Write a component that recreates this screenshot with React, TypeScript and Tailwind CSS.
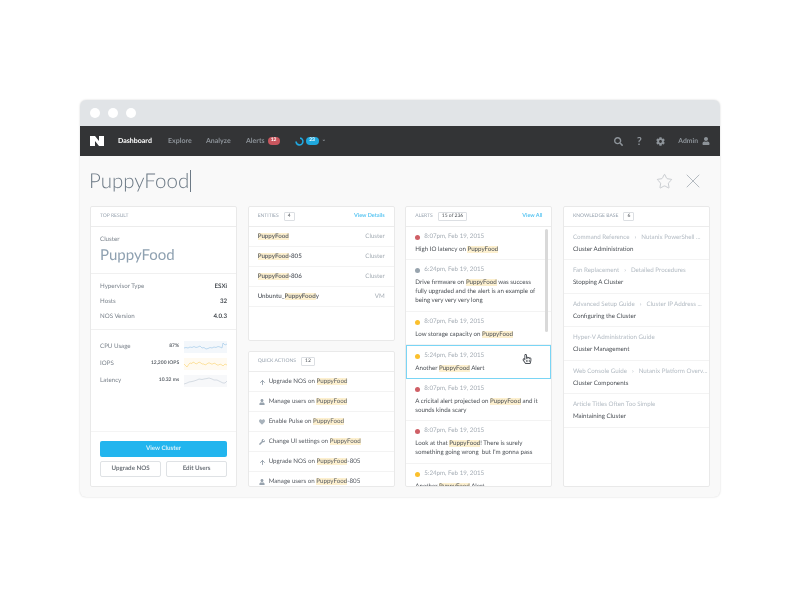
import { ArrowUp, Star, X } from "lucide-react";
import { FaSearch, FaCog, FaUser, FaWrench, FaHeart, FaRegHandPointer } from "react-icons/fa";

const font = "font-['Lato',sans-serif]";

// wraps every PuppyFood in the yellow search highlight
function Hl({ text }: { text: string }) {
  const parts = text.split("PuppyFood");
  return (
    <>
      {parts.map((p, i) => (
        <span key={i}>
          {i > 0 && <span className="bg-[#fdf0cf]">PuppyFood</span>}
          {p}
        </span>
      ))}
    </>
  );
}

function CardHeader({ title, count, link }: { title: string; count?: string; link?: string }) {
  return (
    <div className="flex h-5 shrink-0 items-center border-b border-[#ececec] px-[9px]">
      <span className="text-[5px] text-[#9aa5b1]">{title}</span>
      {count && (
        <span className="ml-[5px] flex h-[9px] items-center rounded-[1px] border border-[#dcdfe3] px-[3px] text-[5px] leading-none text-[#4a4f55]">
          {count}
        </span>
      )}
      {link && <span className="ml-auto text-[5.5px] font-bold text-[#5cc6f2]">{link}</span>}
    </div>
  );
}

function Card({ className, children }: { className?: string; children: React.ReactNode }) {
  return (
    <div className={`flex flex-col overflow-hidden rounded-[2px] border border-[#e9e9e9] bg-white ${className ?? ""}`}>
      {children}
    </div>
  );
}

function Stat({ label, value }: { label: string; value: string }) {
  return (
    <div className="flex h-[15px] items-center justify-between">
      <span className="text-[#7b838c]">{label}</span>
      <span className="font-bold text-[#4a4f55]">{value}</span>
    </div>
  );
}

function Metric({ label, value, bg, stroke, points }: { label: string; value: string; bg: string; stroke: string; points: string }) {
  return (
    <div className="flex h-[17px] items-center">
      <span className="text-[#7b838c]">{label}</span>
      <span className="ml-auto mr-[5px] text-[5px] font-bold text-[#5f656c]">{value}</span>
      <svg width="43" height="12" viewBox="0 0 43 12" className={bg}>
        <polyline points={points} fill="none" stroke={stroke} strokeWidth="0.7" />
      </svg>
    </div>
  );
}

const entities = [
  ["PuppyFood", "Cluster"],
  ["PuppyFood-805", "Cluster"],
  ["PuppyFood-806", "Cluster"],
  ["Unbuntu_PuppyFoody", "VM"],
];

const actionIcons = {
  up: <ArrowUp size={7} strokeWidth={3} className="text-[#8f9aa6]" />,
  user: <FaUser size={6} className="text-[#98a3ae]" />,
  heart: <FaHeart size={6} className="text-[#a9b3bc]" />,
  wrench: <FaWrench size={6} className="text-[#98a3ae]" />,
};

const actions: [keyof typeof actionIcons, string][] = [
  ["up", "Upgrade NOS on PuppyFood"],
  ["user", "Manage users on PuppyFood"],
  ["heart", "Enable Pulse on PuppyFood"],
  ["wrench", "Change UI settings on PuppyFood"],
  ["up", "Upgrade NOS on PuppyFood-805"],
  ["user", "Manage users on PuppyFood-805"],
];

const red = "bg-[#cf5f66]";
const gray = "bg-[#98a4ae]";
const yellow = "bg-[#fbc02d]";

const alerts = [
  { dot: red, time: "8:07pm, Feb 19, 2015", h: "h-[33px]", lines: ["High IO latency on PuppyFood"] },
  { dot: gray, time: "6:24pm, Feb 19, 2015", h: "h-[52px]", lines: ["Drive firmware on PuppyFood was success", "fully upgraded and the alert is an example of", "being very very very long"] },
  { dot: yellow, time: "8:07pm, Feb 19, 2015", h: "h-[33px]", lines: ["Low storage capacity on PuppyFood"] },
  { dot: yellow, time: "5:24pm, Feb 19, 2015", h: "h-[34px]", lines: ["Another PuppyFood Alert"], selected: true },
  { dot: red, time: "8:07pm, Feb 19, 2015", h: "h-[42px]", lines: ["A cricital alert projected on PuppyFood and it", "sounds kinda scary"] },
  { dot: red, time: "8:07pm, Feb 19, 2015", h: "h-[43px]", lines: ["Look at that PuppyFood! There is surely", "something going wrong  but I'm gonna pass"] },
  { dot: yellow, time: "5:24pm, Feb 19, 2015", h: "h-[33px]", lines: ["Another PuppyFood Alert"] },
];

const articles = [
  { crumb: ["Command Reference", "Nutanix PowerShell ..."], title: "Cluster Administration", h: "h-[33px]" },
  { crumb: ["Fan Replacement", "Detailed Procedures"], title: "Stopping A Cluster", h: "h-[34px]" },
  { crumb: ["Advanced Setup Guide", "Cluster IP Address ..."], title: "Configuring the Cluster", h: "h-[33px]" },
  { crumb: ["Hyper-V Administration Guide"], title: "Cluster Management", h: "h-[34px]" },
  { crumb: ["Web Console Guide", "Nutanix Platform Overv..."], title: "Cluster Components", h: "h-[33px]" },
  { crumb: ["Article Titles Often Too Simple"], title: "Maintaining Cluster", h: "h-[34px]" },
];

export default function App() {
  return (
    <div className={`h-[600px] w-[800px] overflow-hidden bg-white pt-[100px] pl-[80px] text-[6.2px] [text-rendering:geometricPrecision] ${font}`}>
      <div className="flex h-[397px] w-[640px] flex-col overflow-hidden rounded-[6px] bg-[#f9f9f9] shadow-[0_0_2px_rgba(0,0,0,0.18)] blur-[0.3px]">
        {/* browser chrome */}
        <div className="flex h-[26px] shrink-0 items-center gap-2 bg-[#e1e4e7] px-[10px]">
          <span className="h-[10px] w-[10px] rounded-full bg-white" />
          <span className="h-[10px] w-[10px] rounded-full bg-white" />
          <span className="h-[10px] w-[10px] rounded-full bg-white" />
        </div>

        {/* nav */}
        <div className="flex h-[30px] shrink-0 items-center bg-[#333436] pl-[10px] pr-[10px] text-[7px] font-bold text-[#8d9399]">
          <svg width="14" height="10" viewBox="0 0 14 10" className="mr-[14px]">
            <path d="M0 0H5L9 5V0H14V10H9L5 5V10H0Z" fill="#fff" />
          </svg>
          <span className="w-[50px] text-white">Dashboard</span>
          <span className="w-[38px]">Explore</span>
          <span className="w-[40px]">Analyze</span>
          <span>Alerts</span>
          <span className="ml-[3px] flex h-[8px] w-[12px] items-center justify-center rounded-full bg-[#c9565e] text-[5px] text-white">12</span>
          <svg width="9" height="9" viewBox="0 0 9 9" className="ml-[15px]">
            <circle cx="4.5" cy="4.5" r="3.4" fill="none" stroke="#20a8e0" strokeWidth="1.6" strokeDasharray="15 6" transform="rotate(-80 4.5 4.5)" />
          </svg>
          <span className="ml-[2px] flex h-[8px] w-[13px] items-center justify-center rounded-full bg-[#1fa8de] text-[5px] text-white">23</span>
          <span className="ml-[3px] text-[5px]">⌄</span>
          <FaSearch size={9} className="ml-auto" />
          <span className="ml-[11px] w-[10px] text-center text-[11px] leading-none">?</span>
          <FaCog size={9} className="ml-[12px]" />
          <span className="ml-[13px] text-[6.8px]">Admin</span>
          <FaUser size={8} className="ml-[4px]" />
        </div>

        {/* search title */}
        <div className="flex h-[50px] shrink-0 items-center px-[9px]">
          <span className="text-[20.5px] leading-none font-light text-[#6d7a86]">PuppyFood</span>
          <span className="ml-[1px] h-[22px] w-px bg-[#6d7a86]" />
          <Star size={17} strokeWidth={1} className="ml-auto text-[#b5bbc1]" />
          <X size={24} strokeWidth={1} className="ml-[8px] mr-[6px] text-[#b5bbc1]" />
        </div>

        <div className="grid h-[281px] grid-cols-4 gap-x-[10.5px] px-[10px]">
          {/* top result */}
          <Card>
            <CardHeader title="TOP RESULT" />
            <div className="h-[47px] shrink-0 border-b border-[#f0f0f0] px-[9px] pt-[8px]">
              <div className="text-[#7b838c]">Cluster</div>
              <div className="mt-[1px] text-[15px] leading-[20px] text-[#8fa1b1]">PuppyFood</div>
            </div>
            <div className="shrink-0 border-b border-[#f0f0f0] px-[9px] py-[5px]">
              <Stat label="Hypervisor Type" value="ESXi" />
              <Stat label="Hosts" value="32" />
              <Stat label="NOS Version" value="4.0.3" />
            </div>
            <div className="flex-1 px-[9px] py-[8px]">
              <Metric label="CPU Usage" value="87%" bg="bg-[#f3f7fb]" stroke="#a5cbea"
                points="0,7 2,6.5 4,7 6,6 8,6.5 10,5.5 12,6.5 14,6 16,5 18,7 20,6.5 22,8 24,7.5 26,6.5 28,7 30,6 32,6.5 34,5.5 36,6 38,7 39,2 41,4 43,3" />
              <Metric label="IOPS" value="12,200 IOPS" bg="bg-[#fffaf0]" stroke="#fbd77e"
                points="0,6 2,8 3,9 5,6 6,5 8,5.5 9,4 11,5 12,6 14,5 15,4 17,5 18,6 20,6 21,7 23,6 24,5 26,5 27,6 29,6 30,5 32,6 33,7 35,7 36,6 38,7 39,8 41,6 43,7" />
              <Metric label="Latency" value="10.32 ms" bg="bg-[#f7f8fa]" stroke="#c6cfd8"
                points="0,9 3,8 5,7 8,6.5 10,6 13,5 15,4 18,4.5 20,4 23,3.5 25,3 28,4 30,5 33,5 35,6 37,7 39,8 41,8 43,6" />
            </div>
            <div className="shrink-0 border-t border-[#f4f4f4] px-[9px] py-[9px]">
              <div className="flex h-4 items-center justify-center rounded-[2px] bg-[#22b5ee] font-bold text-[#d8f2fc]">View Cluster</div>
              <div className="mt-1 grid grid-cols-2 gap-[5px]">
                <div className="flex h-4 items-center justify-center rounded-[2px] border border-[#dfe2e5] font-bold text-[#6b7178]">Upgrade NOS</div>
                <div className="flex h-4 items-center justify-center rounded-[2px] border border-[#dfe2e5] font-bold text-[#6b7178]">Edit Users</div>
              </div>
            </div>
          </Card>

          {/* entities + quick actions */}
          <div className="flex flex-col gap-[10px]">
            <Card className="h-[135px]">
              <CardHeader title="ENTITIES" count="4" link="View Details" />
              {entities.map(([name, type]) => (
                <div key={name} className="flex h-5 shrink-0 items-center justify-between border-b border-[#f3f3f3] px-[9px] pt-[1px]">
                  <span className="font-semibold text-[#565b62]"><Hl text={name} /></span>
                  <span className="text-[#a4acb4]">{type}</span>
                </div>
              ))}
            </Card>
            <Card className="h-[136px]">
              <CardHeader title="QUICK ACTIONS" count="12" />
              {actions.map(([icon, label], i) => (
                <div key={i} className="flex h-5 shrink-0 items-center border-b border-[#f3f3f3] pt-[1px] pl-[10px]">
                  <span className="flex w-[10px] items-center">{actionIcons[icon]}</span>
                  <span className="text-[#565b62]"><Hl text={label} /></span>
                </div>
              ))}
            </Card>
          </div>

          {/* alerts */}
          <Card className="relative">
            <CardHeader title="ALERTS" count="15 of 236" link="View All" />
            {alerts.map((a, i) => (
              <div
                key={i}
                className={`relative shrink-0 pt-[6px] ${a.h} ${a.selected ? "border border-[#7ad5f5] px-[8px]" : "border-b border-[#f3f3f3] px-[9px]"}`}
              >
                <div className="flex h-[8px] items-center text-[#a4acb4]">
                  <span className={`mr-[4px] h-[5px] w-[5px] rounded-full ${a.dot}`} />
                  {a.time}
                </div>
                <div className="mt-[4px] leading-[9px] text-[#4a4f55]">
                  {a.lines.map((l) => (
                    <div key={l} className="whitespace-pre"><Hl text={l} /></div>
                  ))}
                </div>
                {a.selected && (
                  <FaRegHandPointer size={10} className="absolute top-[8px] right-[18px] text-[#4a4f55]" />
                )}
              </div>
            ))}
            <div className="absolute top-[22px] right-[3px] h-[103px] w-[3px] rounded-full bg-[#d9d9d9]" />
          </Card>

          {/* knowledge base */}
          <Card>
            <CardHeader title="KNOWLEDGE BASE" count="6" />
            {articles.map((a) => (
              <div key={a.title} className={`shrink-0 border-b border-[#f3f3f3] px-[9px] pt-[7px] ${a.h}`}>
                <div className="flex h-[8px] items-center whitespace-nowrap text-[#b3bbc3]">
                  {a.crumb[0]}
                  {a.crumb[1] && <span className="mx-[5px]">›</span>}
                  {a.crumb[1]}
                </div>
                <div className="mt-[3px] leading-[9px] text-[#4a4f55]">{a.title}</div>
              </div>
            ))}
          </Card>
        </div>
      </div>
    </div>
  );
}
